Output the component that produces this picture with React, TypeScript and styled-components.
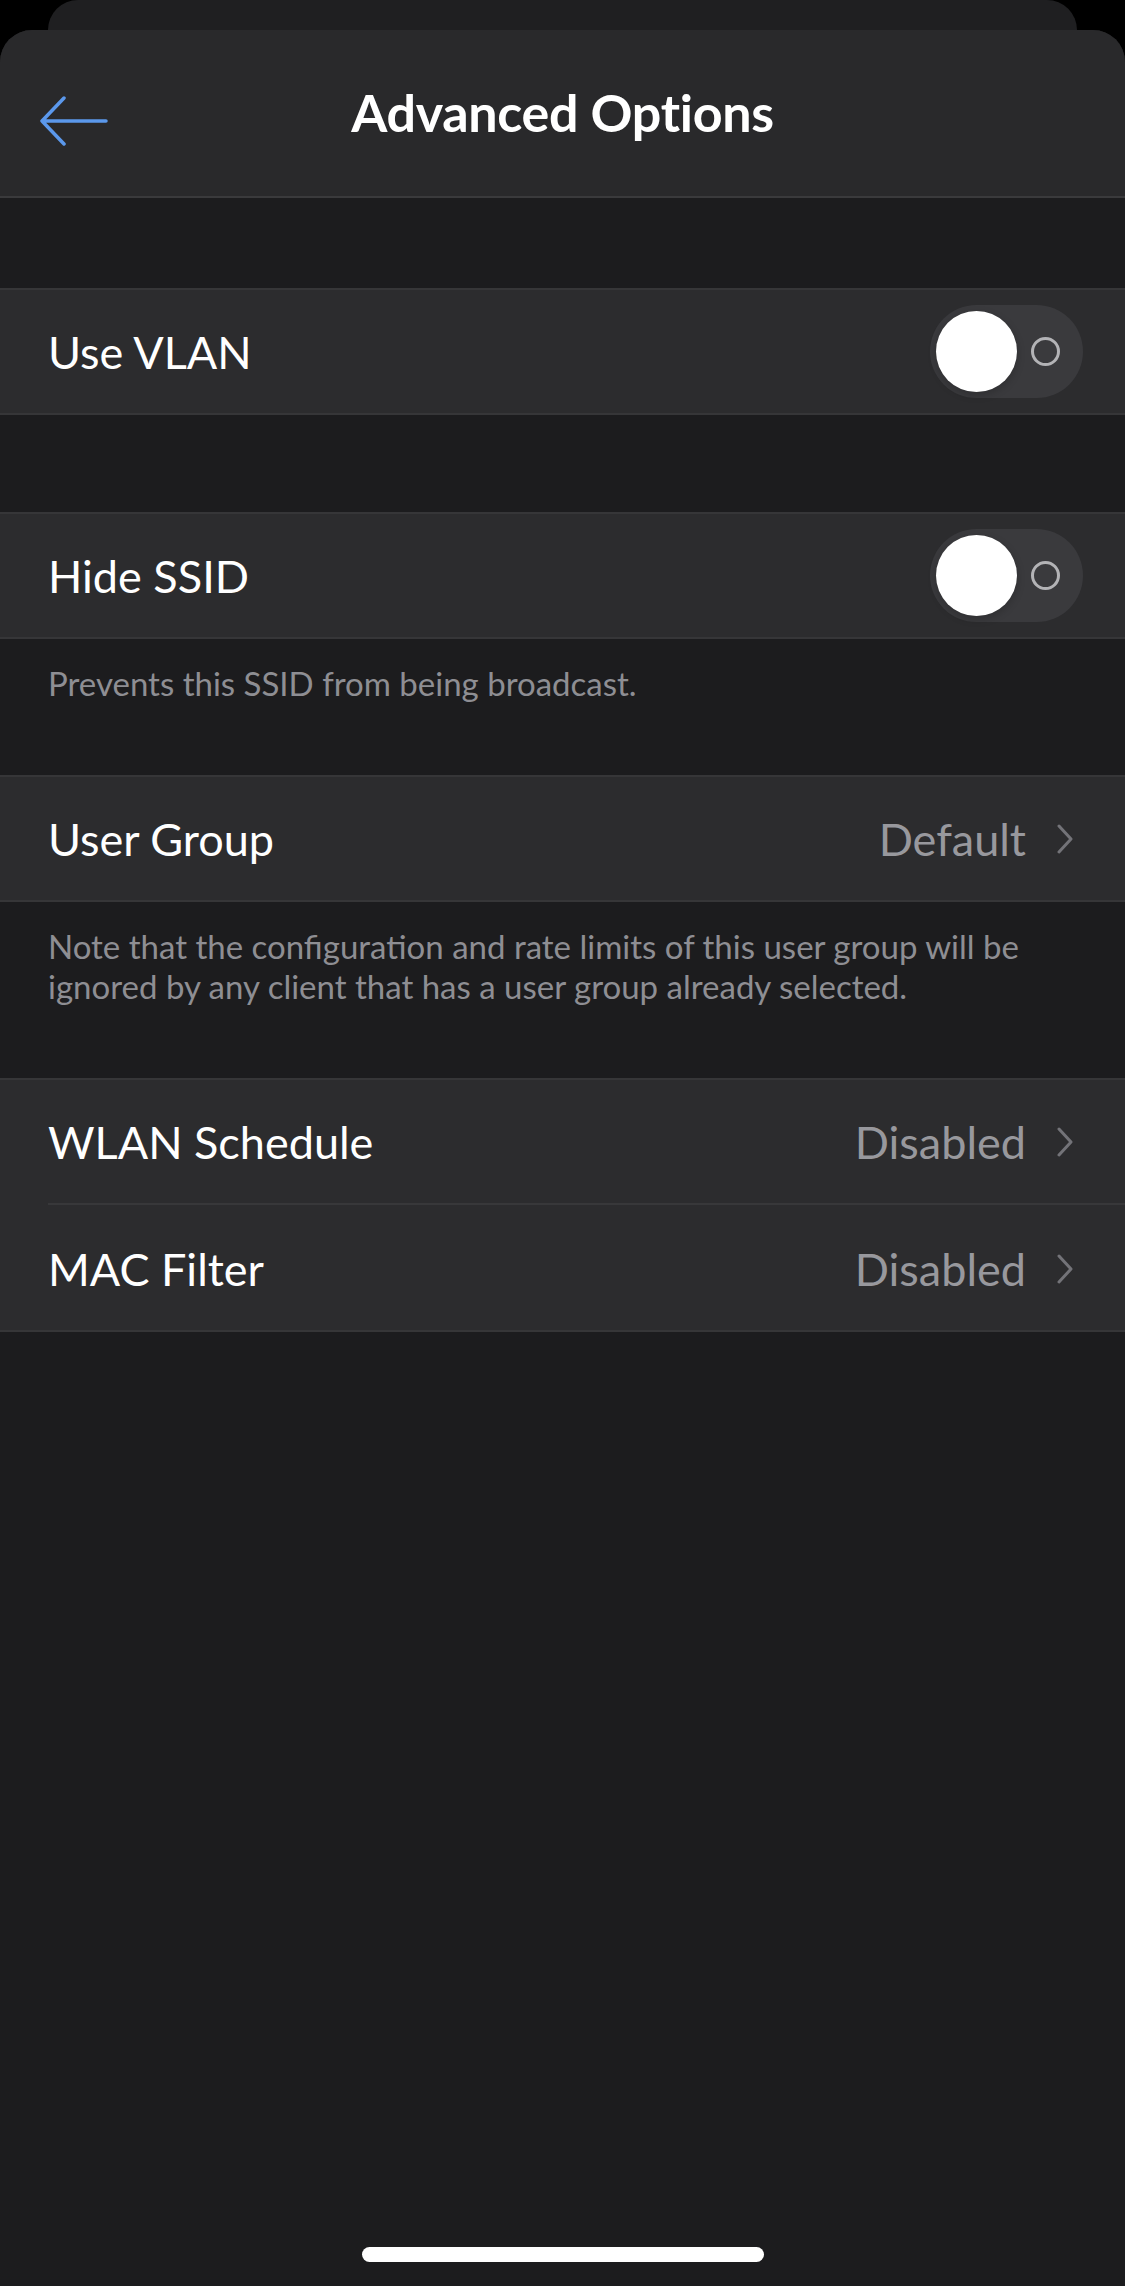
import React from 'react';
import styled, { createGlobalStyle } from 'styled-components';

const GlobalStyle = createGlobalStyle`
    * {
        box-sizing: border-box;
    }

    body {
        margin: 0;
        background: #000;
        font-family: Lato, 'Noto Sans', sans-serif;
        -webkit-font-smoothing: antialiased;
    }
`;

type Row =
    | { kind: 'toggle'; label: string }
    | { kind: 'link'; label: string; value: string };

type Group = {
    gap: number;
    rows: Row[];
    footer?: string[];
};

const groups: Group[] = [
    { gap: 90, rows: [{ kind: 'toggle', label: 'Use VLAN' }] },
    {
        gap: 97,
        rows: [{ kind: 'toggle', label: 'Hide SSID' }],
        footer: ['Prevents this SSID from being broadcast.'],
    },
    {
        gap: 0,
        rows: [{ kind: 'link', label: 'User Group', value: 'Default' }],
        footer: [
            'Note that the configuration and rate limits of this user group will be',
            'ignored by any client that has a user group already selected.',
        ],
    },
    {
        gap: 0,
        rows: [
            { kind: 'link', label: 'WLAN Schedule', value: 'Disabled' },
            { kind: 'link', label: 'MAC Filter', value: 'Disabled' },
        ],
    },
];

function BackArrow() {
    return (
        <svg width='70' height='50' viewBox='0 0 70 50' fill='none'>
            <path
                d='M3 25H67M25 2L3 25L25 48'
                stroke='#5b98ec'
                strokeWidth='3.5'
                strokeLinecap='round'
                strokeLinejoin='round'
            />
        </svg>
    );
}

function Chevron() {
    return (
        <svg width='18' height='30' viewBox='0 0 18 30' fill='none'>
            <path
                d='M3 2L15 15L3 28'
                stroke='#737378'
                strokeWidth='3'
                strokeLinecap='round'
                strokeLinejoin='round'
            />
        </svg>
    );
}

export default function App() {
    return (
        <>
            <GlobalStyle />
            <Page>
                <BackCard />
                <Sheet>
                    <Header>
                        <BackButton>
                            <BackArrow />
                        </BackButton>
                        <Title>Advanced Options</Title>
                    </Header>
                    {groups.map((group, gi) => (
                        <Section key={gi} gap={group.gap}>
                            <Cells>
                                {group.rows.map((row) => (
                                    <Cell key={row.label}>
                                        <Label>{row.label}</Label>
                                        {row.kind === 'toggle' ? (
                                            <Switch>
                                                <Knob />
                                                <OffMark />
                                            </Switch>
                                        ) : (
                                            <Detail>
                                                <Value>{row.value}</Value>
                                                <Chevron />
                                            </Detail>
                                        )}
                                    </Cell>
                                ))}
                            </Cells>
                            {group.footer && (
                                <Footer>
                                    {group.footer.map((line) => (
                                        <div key={line}>{line}</div>
                                    ))}
                                </Footer>
                            )}
                        </Section>
                    ))}
                    <Spacer />
                    <HomeIndicator />
                </Sheet>
            </Page>
        </>
    );
}

const Page = styled.div`
    height: 2286px;
    display: flex;
    flex-direction: column;
    overflow: hidden;
`;

const BackCard = styled.div`
    height: 30px;
    margin: 0 48px;
    flex-shrink: 0;
    background: #1f1f21;
    border-radius: 30px 30px 0 0;
`;

const Sheet = styled.div`
    flex: 1;
    display: flex;
    flex-direction: column;
    background: #1c1c1e;
    border-radius: 32px 32px 0 0;
    overflow: hidden;
`;

const Header = styled.header`
    height: 168px;
    flex-shrink: 0;
    display: flex;
    align-items: center;
    justify-content: center;
    position: relative;
    background: #29292b;
    border-bottom: 2px solid #3a3a3c;
    padding-bottom: 2px;
`;

const BackButton = styled.div`
    position: absolute;
    left: 39px;
    top: 66px;
    display: flex;
`;

const Title = styled.h1`
    margin: 0;
    color: #fff;
    font-size: 52px;
    font-weight: 700;
    letter-spacing: -0.3px;
`;

const Section = styled.section<{ gap: number }>`
    padding-top: ${(p) => p.gap}px;
`;

const Cells = styled.div`
    background: #2c2c2e;
    border-top: 2px solid #363638;
    border-bottom: 2px solid #363638;
`;

const Cell = styled.div`
    height: 123px;
    display: flex;
    align-items: center;
    justify-content: space-between;
    padding: 0 42px 0 48px;
    position: relative;

    & + & {
        height: 127px;
        padding-top: 4px;
    }

    & + &::before {
        content: '';
        position: absolute;
        top: 0;
        left: 48px;
        right: 0;
        height: 2px;
        background: #38383a;
    }
`;

const Label = styled.span`
    color: #fff;
    font-size: 45px;
`;

const Detail = styled.div`
    display: flex;
    align-items: center;
    gap: 30px;
    margin-right: 9px;
`;

const Value = styled.span`
    color: #98989d;
    font-size: 45px;
`;

const Switch = styled.div`
    width: 153px;
    height: 93px;
    border-radius: 47px;
    background: #3a3a3d;
    display: flex;
    align-items: center;
    padding: 0 23px 0 6px;
    justify-content: space-between;
`;

const Knob = styled.div`
    width: 81px;
    height: 81px;
    border-radius: 50%;
    background: #fff;
    box-shadow: 0 3px 8px rgba(0, 0, 0, 0.2);
`;

const OffMark = styled.div`
    width: 29px;
    height: 29px;
    border-radius: 50%;
    border: 3.5px solid #b3b3b6;
`;

const Footer = styled.div`
    color: #8e8e93;
    font-size: 33px;
    line-height: 40px;
    padding: 24px 48px 72px;
`;

const Spacer = styled.div`
    flex: 1;
`;

const HomeIndicator = styled.div`
    width: 402px;
    height: 15px;
    border-radius: 8px;
    background: #fff;
    align-self: center;
    margin-bottom: 24px;
`;
